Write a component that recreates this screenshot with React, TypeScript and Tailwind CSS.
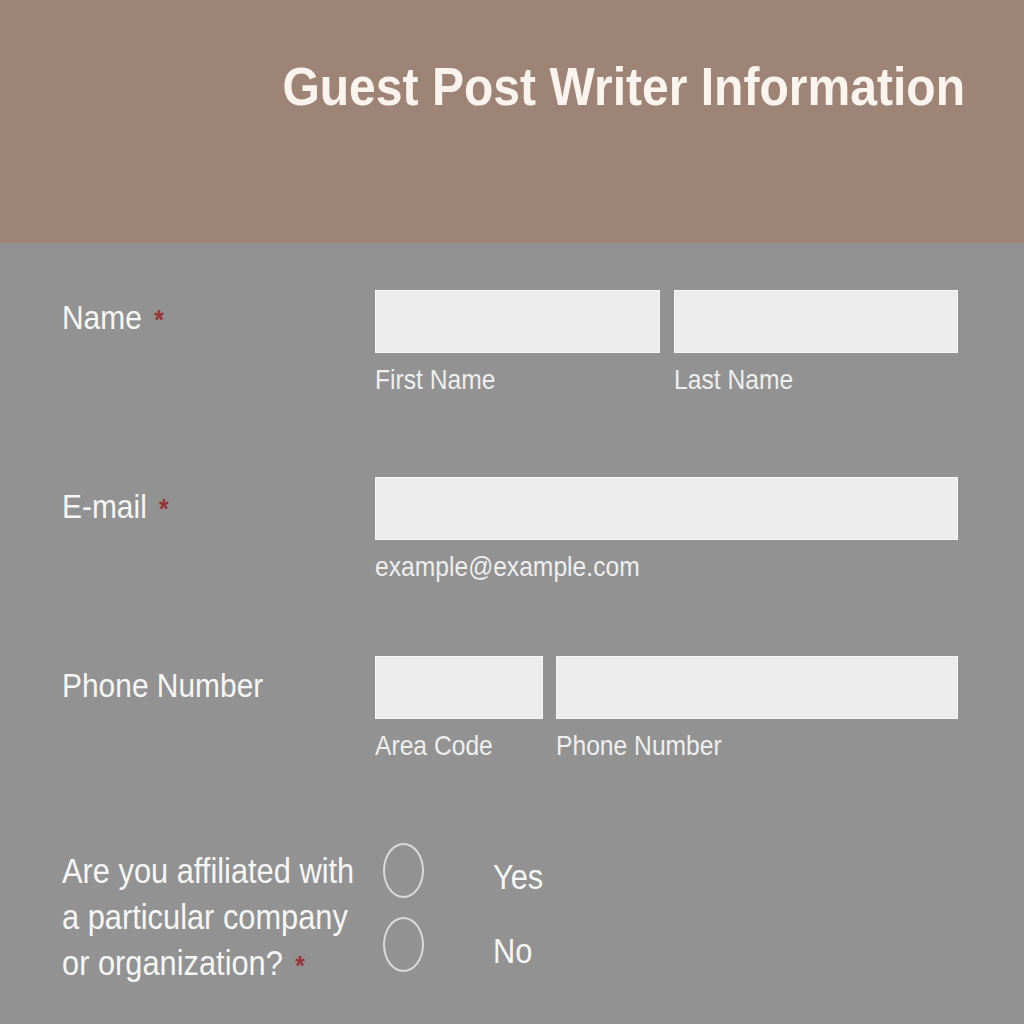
import React from 'react';

const Req = () => <span className="ml-[14px] text-[28px] font-bold text-[#953538]">*</span>;

const Sub: React.FC<{ text: string }> = ({ text }) => (
  <div className="mt-[9px] h-[35px] whitespace-nowrap text-[28px] leading-[35px] text-[#eeeeee]">
    <span className="inline-block origin-left scale-x-[0.88]">{text}</span>
  </div>
);

const Label: React.FC<{ text: string; required?: boolean; className?: string }> = ({ text, required, className }) => (
  <div className={`w-[375px] shrink-0 pl-[62px] ${className ?? ''}`}>
    <span className="inline-block origin-left scale-x-[0.88] whitespace-nowrap text-[34px] leading-[46px] text-[#f6f6f6]">
      {text}
      {required && <Req />}
    </span>
  </div>
);

const Input = () => <div className="h-[63px] border border-[#f6f6f6] bg-[#ececec]" />;

const Radio: React.FC<{ label: string }> = ({ label }) => (
  <div className="flex items-center">
    <div className="ml-[8px] h-[55px] w-[41px] rounded-[50%] border-2 border-[#d9d9d9]" />
    <span className="ml-[69px] mt-[12px] inline-block origin-left scale-x-[0.88] text-[35px] leading-[35px] text-[#f6f6f6]">
      {label}
    </span>
  </div>
);

export default function App() {
  return (
    <div className="min-h-screen bg-[#929292]" style={{ fontFamily: '"Liberation Sans", Arial, sans-serif' }}>
      <header className="flex h-[243px] justify-end bg-[#9e8477] pr-[59px] pt-[59px]">
        <h1 className="inline-block h-[54px] origin-right scale-x-[0.89] whitespace-nowrap text-[54px] font-bold leading-[54px] text-[#fbf4ee]">
          Guest Post Writer Information
        </h1>
      </header>

      <main className="pb-10">
        {/* Name */}
        <section className="flex pt-[47px]">
          <Label text="Name" required className="mt-[4px]" />
          <div className="flex w-[583px] gap-[14px]">
            <div className="flex-1">
              <Input />
              <Sub text="First Name" />
            </div>
            <div className="flex-1">
              <Input />
              <Sub text="Last Name" />
            </div>
          </div>
        </section>

        {/* E-mail */}
        <section className="mt-[80px] flex">
          <Label text="E-mail" required className="mt-[6px]" />
          <div className="w-[583px]">
            <Input />
            <Sub text="example@example.com" />
          </div>
        </section>

        {/* Phone */}
        <section className="mt-[72px] flex">
          <Label text="Phone Number" className="mt-[6px]" />
          <div className="flex w-[583px] gap-[13px]">
            <div className="w-[168px]">
              <Input />
              <Sub text="Area Code" />
            </div>
            <div className="flex-1">
              <Input />
              <Sub text="Phone Number" />
            </div>
          </div>
        </section>

        {/* Affiliation */}
        <section className="mt-[80px] flex">
          <div className="w-[375px] shrink-0 pl-[62px] pt-[5px]">
            <p className="inline-block origin-left scale-x-[0.88] whitespace-nowrap text-[35px] leading-[46px] text-[#f6f6f6]">
              Are you affiliated with
              <br />
              a particular company
              <br />
              or organization?
              <Req />
            </p>
          </div>
          <div className="flex w-[583px] flex-col gap-[19px]">
            <Radio label="Yes" />
            <Radio label="No" />
          </div>
        </section>
      </main>
    </div>
  );
}
